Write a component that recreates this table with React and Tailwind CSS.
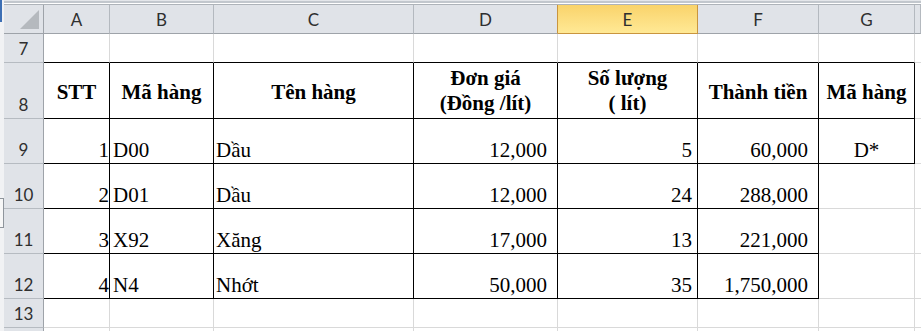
const heads = [
  { label: "", corner: true, cls: "bg-[#e0e3e8] border-r-[#9ea3a9] border-b-[#9ea3a9]" },
  { label: "A", cls: "bg-[#e0e3e8] border-r-[#b4b9bf] border-b-[#9ea3a9]" },
  { label: "B", cls: "bg-[#e0e3e8] border-r-[#b4b9bf] border-b-[#9ea3a9]" },
  { label: "C", cls: "bg-[#e0e3e8] border-r-[#b4b9bf] border-b-[#9ea3a9]" },
  { label: "D", cls: "bg-[#e0e3e8] border-r-[#c9953f] border-b-[#9ea3a9]" },
  { label: "E", cls: "bg-linear-to-b from-[#f9d36a] to-[#ffe995] border-r-[#c9953f] border-b-[#c9953f]" },
  { label: "F", cls: "bg-[#e0e3e8] border-r-[#b4b9bf] border-b-[#9ea3a9]" },
  { label: "G", cls: "bg-[#e0e3e8] border-r-[#b4b9bf] border-b-[#9ea3a9]" },
  { label: "", cls: "bg-[#e0e3e8] border-r-[#b4b9bf] border-b-[#9ea3a9]" },
];

// horizontal placement of the text in each column A..G
const align = [
  "justify-end pr-0",
  "justify-start pl-[3px]",
  "justify-start pl-[2px]",
  "justify-end pr-[10px]",
  "justify-end pr-[5px]",
  "justify-end pr-[10px]",
  "justify-center",
];

const R = { k: "border-r-black", g: "border-r-[#d9d9d9]" };
const B = { k: "border-b-black", g: "border-b-[#d9d9d9]" };

const rows = [
  { n: 7, r: "ggggggg", b: "kkkkkkk", cells: [] },
  {
    n: 8,
    head: true,
    r: "kkkkkkk",
    b: "kkkkkkk",
    cells: ["STT", "Mã hàng", "Tên hàng", ["Đơn giá", "(Đồng /lít)"], ["Số lượng", "( lít)"], "Thành tiền", "Mã hàng"],
  },
  { n: 9, r: "kkkkkkk", b: "kkkkkkk", cells: ["1", "D00", "Dầu", "12,000", "5", "60,000", "D*"] },
  { n: 10, r: "kkkkkkg", b: "kkkkkkg", cells: ["2", "D01", "Dầu", "12,000", "24", "288,000", ""] },
  { n: 11, r: "kkkkkkg", b: "kkkkkkg", cells: ["3", "X92", "Xăng", "17,000", "13", "221,000", ""] },
  { n: 12, r: "kkkkkkg", b: "kkkkkkg", cells: ["4", "N4", "Nhớt", "50,000", "35", "1,750,000", ""] },
  { n: 13, r: "ggggggg", b: "ggggggg", cells: [] },
];

function HeadCell({ h }) {
  return (
    <div
      className={`flex items-end justify-center pb-[3px] border-r border-b font-['Lato','Open_Sans',sans-serif] text-[17px] leading-[20px] text-[#2f2f2f] ${h.cls}`}
    >
      {h.corner ? (
        <svg width="39" height="28" className="self-start -mb-[3px]">
          <polygon points="35,5 35,24 16,24" fill="#b5b9be" />
        </svg>
      ) : (
        h.label
      )}
    </div>
  );
}

function Cell({ row, i }) {
  const v = row.cells[i];
  const border = `border-r border-b ${R[row.r[i]]} ${B[row.b[i]]}`;
  if (row.head && v) {
    const lines = Array.isArray(v) ? v : [v];
    return (
      <div
        className={`flex flex-col items-center justify-center font-['Liberation_Serif','Times_New_Roman','DejaVu_Serif',serif] font-bold text-[21px] leading-[25px] text-black ${
          lines.length === 1 ? "pt-[3px]" : ""
        } ${border}`}
      >
        {lines.map((l) => (
          <span key={l} className="whitespace-pre">
            {l}
          </span>
        ))}
      </div>
    );
  }
  return (
    <div
      className={`flex items-end pb-px font-['Liberation_Serif','Times_New_Roman','DejaVu_Serif',serif] text-[21px] leading-[24px] text-black whitespace-pre ${align[i]} ${border}`}
    >
      {v || ""}
    </div>
  );
}

export default function App() {
  return (
    <div className="w-[921px] h-[331px] overflow-hidden bg-white flex">
      <div className="w-[4px] h-full flex flex-col bg-[#f1f2f4]">
        <div className="w-[2px] h-[22px] bg-[#3d6fb4]" />
        <div className="h-[176px]" />
        <div className="h-[30px] border-t border-r border-b border-[#8f959c] bg-[#f7f7f7]" />
      </div>

      <div className="flex-1 flex flex-col">
        <div className="h-[5px] flex flex-col">
          <div className="h-px bg-[#e4e6ea]" />
          <div className="h-[2px] bg-[#c2c7cd]" />
          <div className="h-px bg-white" />
          <div className="h-px bg-[#aeb3b9]" />
        </div>

        <div className="grid grid-cols-[40px_66px_104px_200px_144px_140px_121px_96px_6px] grid-rows-[29px_29px_56px_45px_45px_45px_45px_29px_3px]">
          {heads.map((h, i) => (
            <HeadCell key={i} h={h} />
          ))}

          {rows.map((row) => (
            <div key={row.n} className="contents">
              <div className="flex items-end justify-center pb-[3px] bg-[#e0e3e8] border-r border-b border-r-[#9ea3a9] border-b-[#b6bbc1] font-['Lato','Open_Sans',sans-serif] text-[17px] leading-[20px] text-[#2f2f2f]">
                {row.n}
              </div>
              {[0, 1, 2, 3, 4, 5, 6].map((i) => (
                <Cell key={i} row={row} i={i} />
              ))}
              <div className="border-b border-b-[#d9d9d9]" />
            </div>
          ))}

          {[0, 1, 2, 3, 4, 5, 6, 7, 8].map((i) => (
            <div
              key={i}
              className={i === 0 ? "bg-[#e0e3e8] border-r border-r-[#9ea3a9]" : i < 8 ? "border-r border-r-[#d9d9d9]" : ""}
            />
          ))}
        </div>
      </div>
    </div>
  );
}
